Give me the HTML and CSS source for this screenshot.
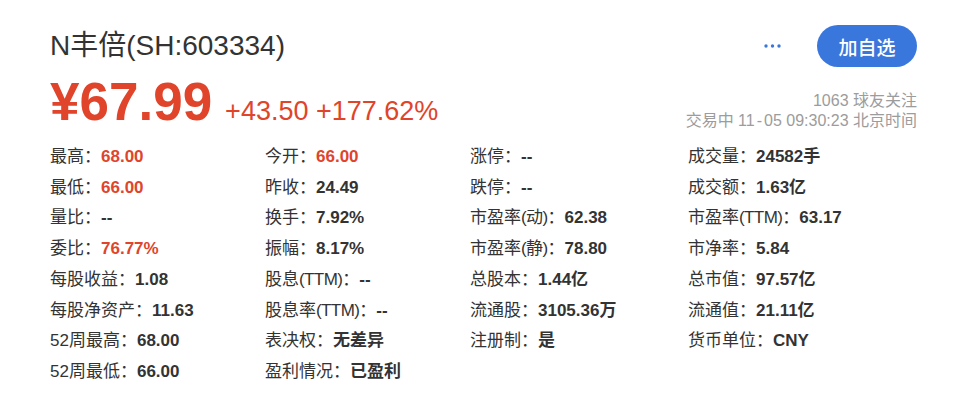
FILE: index.html
```html
<!DOCTYPE html>
<html lang="zh-CN">
<head>
<meta charset="utf-8">
<title>N丰倍(SH:603334)</title>
<link rel="stylesheet" href="styles.css">
</head>
<body>
<div class="quote">
  <div class="head">
    <h1 class="title">N丰倍(SH:603334)</h1>
    <div class="actions">
      <svg class="more" width="20" height="6" viewBox="0 0 20 6"><circle cx="3" cy="3" r="1.7"/><circle cx="9.5" cy="3" r="1.7"/><circle cx="16" cy="3" r="1.7"/></svg>
      <button class="follow">加自选</button>
    </div>
  </div>
  <div class="price-row">
    <div class="price-line">
      <span class="price">¥67.99</span>
      <span class="change">+43.50 +177.62%</span>
    </div>
    <div class="meta">
      <div>1063 球友关注</div>
      <div>交易中 11<span class="dash">-</span>05 09:30:23 北京时间</div>
    </div>
  </div>
  <div class="grid">
    <div class="cell">最高：<b class="up">68.00</b></div>
    <div class="cell">今开：<b class="up">66.00</b></div>
    <div class="cell">涨停：<b>--</b></div>
    <div class="cell">成交量：<b>24582手</b></div>

    <div class="cell">最低：<b class="up">66.00</b></div>
    <div class="cell">昨收：<b>24.49</b></div>
    <div class="cell">跌停：<b>--</b></div>
    <div class="cell">成交额：<b>1.63亿</b></div>

    <div class="cell">量比：<b>--</b></div>
    <div class="cell">换手：<b>7.92%</b></div>
    <div class="cell">市盈率<span class="tt">(动)</span>：<b>62.38</b></div>
    <div class="cell">市盈率<span class="tt">(TTM)</span>：<b>63.17</b></div>

    <div class="cell">委比：<b class="up">76.77%</b></div>
    <div class="cell">振幅：<b>8.17%</b></div>
    <div class="cell">市盈率<span class="tt">(静)</span>：<b>78.80</b></div>
    <div class="cell">市净率：<b>5.84</b></div>

    <div class="cell">每股收益：<b>1.08</b></div>
    <div class="cell">股息<span class="tt">(TTM)</span>：<b>--</b></div>
    <div class="cell">总股本：<b>1.44亿</b></div>
    <div class="cell">总市值：<b>97.57亿</b></div>

    <div class="cell">每股净资产：<b>11.63</b></div>
    <div class="cell">股息率<span class="tt">(TTM)</span>：<b>--</b></div>
    <div class="cell">流通股：<b>3105.36万</b></div>
    <div class="cell">流通值：<b>21.11亿</b></div>

    <div class="cell">52周最高：<b>68.00</b></div>
    <div class="cell">表决权：<b>无差异</b></div>
    <div class="cell">注册制：<b>是</b></div>
    <div class="cell">货币单位：<b>CNY</b></div>

    <div class="cell">52周最低：<b>66.00</b></div>
    <div class="cell">盈利情况：<b>已盈利</b></div>
  </div>
</div>
</body>
</html>
```
FILE: styles.css
```css
html, body {
  margin: 0;
  padding: 0;
  background: #fff;
}
body {
  font-family: "Liberation Sans", "Noto Sans CJK SC", sans-serif;
  color: #333;
}
.quote {
  padding: 25px 43px 0 50px;
}
.head {
  display: flex;
  align-items: center;
  justify-content: space-between;
  height: 42px;
}
.title {
  margin: 0;
  font-size: 28px;
  font-weight: normal;
  color: #333;
  line-height: 32px;
}
.actions {
  display: flex;
  align-items: center;
  gap: 34px;
}
.more {
  fill: #3a77dc;
  display: block;
}
.follow {
  width: 100px;
  height: 42px;
  border: none;
  border-radius: 21px;
  background: #3a77dc;
  color: #fff;
  font-family: "Liberation Sans", "Noto Sans CJK SC", sans-serif;
  font-size: 19px;
  font-weight: 500;
  padding: 0;
  cursor: pointer;
}
.price-row {
  display: flex;
  justify-content: space-between;
  align-items: flex-start;
  margin-top: 9px;
  height: 52px;
}
.price-line {
  display: flex;
  align-items: baseline;
  gap: 13px;
}
.price {
  font-size: 53px;
  line-height: 52px;
  font-weight: bold;
  color: #e0442a;
}
.change {
  font-size: 27px;
  color: #e0442a;
}
.meta {
  margin-top: 15px;
  text-align: right;
  font-size: 16px;
  line-height: 20px;
  color: #9c9c9c;
}
.meta .dash {
  padding: 0 2px;
}
.grid {
  margin-top: 14px;
  display: grid;
  grid-template-columns: 215px 205px 218px 1fr;
}
.cell {
  font-size: 17px;
  line-height: 30.7px;
  color: #333;
  white-space: nowrap;
}
.cell .tt {
  letter-spacing: -0.6px;
}
.cell b {
  font-weight: bold;
  color: #333;
}
.cell b.up {
  color: #e0442a;
}
```
